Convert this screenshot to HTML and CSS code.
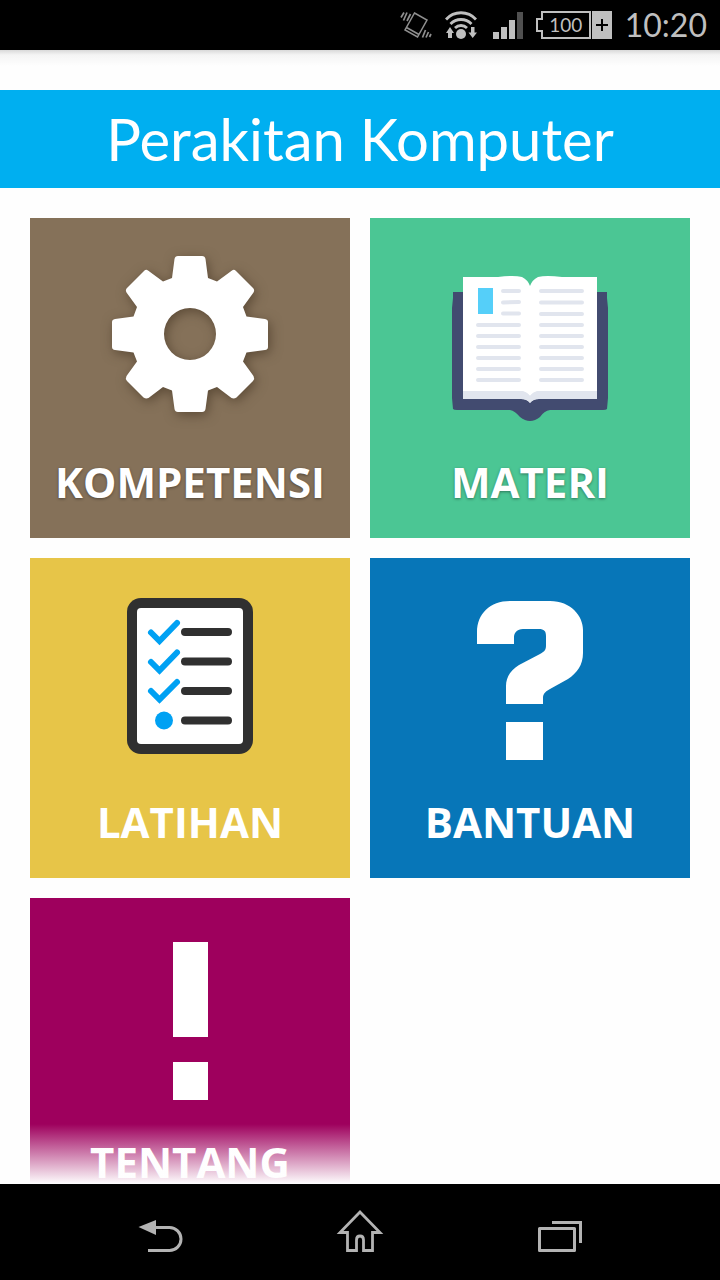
FILE: index.html
```html
<!DOCTYPE html>
<html lang="id">
<head>
<meta charset="utf-8">
<meta name="viewport" content="width=device-width, initial-scale=1">
<title>Perakitan Komputer</title>
<link rel="stylesheet" href="styles.css">
</head>
<body>
<header class="status">
  <svg class="status-vibrate" width="32" height="30" viewBox="0 0 32 30" fill="none" stroke="#8f8f8f" stroke-width="1.5" aria-hidden="true">
    <path d="M14.500 3L27 10L17.500 27L5 20ZM6.500 17.500L19 24.500"/>
    <path stroke-width="1.700" d="M1 7.500L4 2.500M3.500 10.500L7 2.500M7 11L10.500 4M22.500 27.500L25.500 20M26 27.500L28.500 22M29.500 27L31 24"/>
  </svg>
  <svg width="32" height="30" viewBox="0 0 32 30" aria-hidden="true">
    <g fill="none" stroke="#bfbfbf" stroke-width="2.800">
      <path d="M1 9.500A20 20 0 0 1 31 9.500M5.500 14A14.500 14.500 0 0 1 26.500 14M10 18A8.500 8.500 0 0 1 22 18"/>
    </g>
    <circle cx="16" cy="24" r="5" fill="#bfbfbf"/>
    <path fill="#bfbfbf" d="M5 17L9 23H7V28H3V23H1ZM26 17H29.500V22.500H32L27.700 28L23.500 22.500H26Z"/>
  </svg>
  <svg class="status-signal" width="30" height="28" viewBox="0 0 30 28" aria-hidden="true">
    <path fill="#bfbfbf" d="M0 21H6V28H0ZM8 16H14V28H8ZM16 9H22V28H16Z"/>
    <path fill="#505050" d="M24 1H30V28H24Z"/>
  </svg>
  <span class="battery">
    <svg class="battery-shape" width="76" height="28" viewBox="0 0 76 28" aria-hidden="true">
      <path fill="none" stroke="#bfbfbf" stroke-width="2" d="M6 1H54V27H6V20H1V8H6Z"/>
      <path fill="#bfbfbf" d="M56 0H76V28H56Z"/>
      <path stroke="#000" stroke-width="2" d="M60 14H72M66 8V20"/>
    </svg>
    <span class="battery-level">100</span>
  </span>
  <time class="clock">10:20</time>
</header>

<main class="screen">
  <h1 class="title">Perakitan Komputer</h1>
  <nav class="grid">
    <a class="tile kompetensi" href="#kompetensi">
      <svg class="picture gear" viewBox="0 0 320 230" aria-hidden="true">
        <path fill="#fff" fill-rule="evenodd" d="M148 38H172Q175 38 175.500 41L178 60L187 63.500L202 52.500Q204 51 206 53L223 70Q225 72 223.500 74.500L213 89L216.500 98.500L235 101Q238 101.500 238 104V129Q238 131.500 235 132L216.500 134.500L213 143.500L223.500 158Q225 160.500 223 163L206.500 179.500Q204 181 201.500 180L187 169L178 172.500L175.500 191Q175 194 172 194H148Q145 194 144.500 191L142 172.500L133 169L118.500 180Q116 181 113.500 179.500L97 163Q95 160.500 96.500 158L107 143.500L103.500 134.500L85 132Q82 131.500 82 129V104Q82 101.500 85 101L103.500 98.500L107 89L96.500 74.500Q95 72 97 70L114 53Q116 51 118 52.500L133 63.500L142 60L144.500 41Q145 38 148 38ZM160 90A26 26 0 1 0 160 142A26 26 0 1 0 160 90Z"/>
      </svg>
      <span class="label shaded">KOMPETENSI</span>
    </a>
    <a class="tile materi" href="#materi">
      <svg class="picture" viewBox="0 0 320 230" aria-hidden="true">
        <path fill="#424b70" d="M83 74H237V80L238 90V180L237 191Q236 192 233 192H180Q174 193 170 199Q160 207 150 199Q145 193 140 192H87Q84 192 83 191L82 180V90L83 80Z"/>
        <path fill="#e1e5ee" d="M93 170H227V181H169Q163 181 160 185Q157 181 151 181H93Z"/>
        <path fill="#fff" d="M93 59H128Q144 57 152 59Q158 62 160 68Q162 62 168 59Q176 57 192 59H227V173H168Q163 174 160 178Q157 174 152 173H93Z"/>
        <path fill="#55cff9" d="M108 70H123V96H108Z"/>
        <g fill="none" stroke="#e1e5ee" stroke-width="4" stroke-linecap="round">
          <path d="M133 73H149M133 84.500L149 84M133 95.500H149M108 107H149M108 118H149M108 129H149M108 140H149M108 151H149M108 162H149"/>
          <path d="M171 73H212M171 84.500H212M171 96H212M171 107H212M171 118H212M171 129H212M171 140H212M171 151H212M171 162H212"/>
        </g>
        <path fill="#e1e5ee" d="M93 173H152Q157 174 160 178Q163 174 168 173H227V181H169Q163 181 160 185Q157 181 151 181H93Z"/>
      </svg>
      <span class="label shaded">MATERI</span>
    </a>
    <a class="tile latihan" href="#latihan">
      <svg class="picture" viewBox="0 0 320 230" aria-hidden="true">
        <rect x="97" y="40" width="126" height="156" rx="14" fill="#303030"/>
        <rect x="107" y="50" width="106" height="136" rx="4" fill="#fff"/>
        <g fill="none" stroke="#303030" stroke-width="8" stroke-linecap="round">
          <path d="M155 74H198M155 103.500H198M155 133H198M155 162.500H198"/>
        </g>
        <g fill="none" stroke="#00a1f3" stroke-width="6" stroke-linecap="round">
          <path d="M121 74.500L129.500 83L147 65M121 104L129.500 112.500L147 94.500M121 133L129.500 141.500L147 124"/>
        </g>
        <circle cx="134" cy="162.500" r="9" fill="#00a1f3"/>
      </svg>
      <span class="label">LATIHAN</span>
    </a>
    <a class="tile bantuan" href="#bantuan">
      <svg class="picture" viewBox="0 0 320 230" aria-hidden="true">
        <path fill="#fff" d="M107 86V74C107 56 120 43 140 43H180C201 43 213 58 213 72V95C213 107 207 115 198 121L180 131C174 134 173 137 173 140V146H136V128C136 119 141 112 149 107L170 96C175 93 176 92 176 87V78C176 73 174 71 169 71H153C147 71 144 75 144 79V86ZM136 164H173V202H136Z"/>
      </svg>
      <span class="label">BANTUAN</span>
    </a>
    <a class="tile tentang" href="#tentang">
      <svg class="picture" viewBox="0 0 320 230" aria-hidden="true">
        <path fill="#fff" d="M143 44H178V139H143ZM143 164H178V202H143Z"/>
      </svg>
      <span class="label">TENTANG</span>
    </a>
  </nav>
</main>

<footer class="keys">
  <button class="key" type="button" aria-label="Kembali">
    <svg width="48" height="48" viewBox="0 0 48 48" fill="none" stroke="#b3b3b3" stroke-width="3">
      <path d="M18 19.500H33.500A11 11 0 0 1 33.500 42.500H12"/>
      <path fill="#b3b3b3" stroke="none" d="M2.500 19L20 12V27Z"/>
    </svg>
  </button>
  <button class="key" type="button" aria-label="Beranda">
    <svg width="48" height="48" viewBox="0 0 48 48" fill="none" stroke="#b3b3b3" stroke-width="2.800">
      <path d="M24 4L4 24.500H11.500V42.500H20.500V32Q20.500 28 24 28Q27.500 28 27.500 32V42.500H36.500V24.500H44Z"/>
    </svg>
  </button>
  <button class="key" type="button" aria-label="Aplikasi terbaru">
    <svg width="48" height="48" viewBox="0 0 48 48" fill="none" stroke="#b3b3b3" stroke-width="3">
      <path stroke-linejoin="round" d="M3.500 20.500H38.500V42.500H3.500Z"/>
      <path d="M16 14.500H44.500V35"/>
    </svg>
  </button>
</footer>
</body>
</html>
```
FILE: styles.css
```css
* {
  box-sizing: border-box;
}

body {
  display: flex;
  flex-direction: column;
  height: 100vh;
  margin: 0;
  background: #fefefe;
  color: #fff;
  font-family: Lato, "Liberation Sans", sans-serif;
}

svg {
  display: block;
}

/* Status bar */
.status {
  display: flex;
  align-items: center;
  justify-content: flex-end;
  flex: none;
  gap: 13px;
  height: 50px;
  padding-right: 13px;
  background: #000;
  color: #bfbfbf;
}

.status-signal {
  margin-left: 3px;
}

.battery {
  position: relative;
}

.battery-level {
  position: absolute;
  inset: 0 22px 0 6px;
  font-size: 19px;
  line-height: 28px;
  text-align: center;
}

.clock {
  font-size: 32px;
  line-height: 50px;
}

/* Scrolling content */
.screen {
  position: relative;
  flex: 1;
  min-height: 0;
  padding-top: 40px;
  overflow: hidden;
  background: linear-gradient(#d9d9d9, #f4f4f4 5px, #fefefe 16px);
}

.screen::after {
  content: "";
  position: absolute;
  inset: auto 0 0;
  height: 60px;
  background: linear-gradient(rgba(254, 254, 254, 0), #fefefe);
  pointer-events: none;
}

.title {
  margin: 0;
  background: #00aff0;
  font-size: 58px;
  font-weight: 400;
  line-height: 98px;
  text-align: center;
}

.grid {
  display: grid;
  grid-template-columns: 1fr 1fr;
  gap: 20px;
  padding: 30px;
}

.tile {
  display: flex;
  flex-direction: column;
  aspect-ratio: 1;
  color: #fff;
  text-decoration: none;
}

.picture {
  width: 100%;
}

.gear {
  filter: drop-shadow(2px 3px 6px rgba(50, 35, 20, 0.5));
}

.label {
  font-family: "Open Sans", "Noto Sans", sans-serif;
  font-size: 42px;
  font-weight: 700;
  line-height: 68px;
  text-align: center;
}

.shaded {
  text-shadow: 0 1px 3px rgba(0, 0, 0, 0.4);
}

.kompetensi {
  background: #857159;
}

.materi {
  background: #4bc694;
}

.latihan {
  background: #e7c548;
}

.bantuan {
  background: #0776b8;
}

.tentang {
  background: #9e005d;
}

/* System keys */
.keys {
  display: flex;
  justify-content: center;
  flex: none;
  gap: 52px;
  height: 96px;
  background: #000;
}

.key {
  display: flex;
  align-items: center;
  justify-content: center;
  width: 148px;
  padding: 0;
  border: 0;
  background: none;
}
```
